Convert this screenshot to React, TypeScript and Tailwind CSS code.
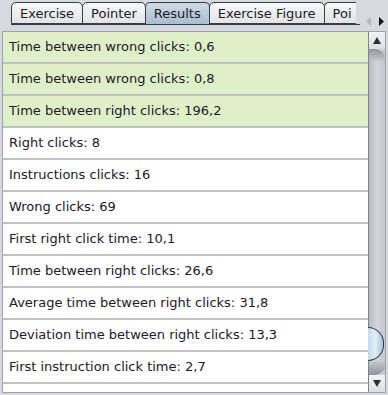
import React from 'react';

// ── 資料 ──────────────────────────────────────────────────────────────────────
const TABS = ['Exercise', 'Pointer', 'Results', 'Exercise Figure', 'Poi'];
const ACTIVE = 'Results';

const ROWS: { text: string; hi?: boolean }[] = [
  { text: 'Time between wrong clicks: 0,6', hi: true },
  { text: 'Time between wrong clicks: 0,8', hi: true },
  { text: 'Time between right clicks: 196,2', hi: true },
  { text: 'Right clicks: 8' },
  { text: 'Instructions clicks: 16' },
  { text: 'Wrong clicks: 69' },
  { text: 'First right click time: 10,1' },
  { text: 'Time between right clicks: 26,6' },
  { text: 'Average time between right clicks: 31,8' },
  { text: 'Deviation time between right clicks: 13,3' },
  { text: 'First instruction click time: 2,7' },
  { text: '' },
];

function Tab({ label }: { label: string }) {
  const active = label === ACTIVE;
  const clipped = label === 'Poi';
  return (
    <div
      className={`h-[22px] shrink-0 -mr-px flex items-center border border-[#3a3d44] rounded-t-[5px] px-[8px] leading-none
        ${active
          ? 'bg-gradient-to-b from-[#cfdbe7] to-[#a8bdd1] border-b-0'
          : 'bg-gradient-to-b from-[#f7f8fa] to-[#e2e4e9]'}
        ${clipped ? 'w-[32px] overflow-hidden border-r-0 rounded-tr-none' : ''}`}
    >
      <span className="text-[13px] text-[#1b1b22] whitespace-nowrap">{label}</span>
    </div>
  );
}

function ScrollBar() {
  return (
    <div className="w-[17px] shrink-0 flex flex-col border-l border-[#7f838b] bg-gradient-to-r from-[#b9bcc3] via-[#d3d6dc] to-[#c4c7ce]">
      {/* 上箭頭 */}
      <div className="h-[17px] flex items-center justify-center bg-gradient-to-b from-[#f2f3f5] to-[#dcdee3]">
        <svg width="8" height="7" viewBox="0 0 8 7"><path d="M4 0 L8 7 L0 7 Z" fill="#2c2f36" /></svg>
      </div>
      <div className="h-[12px] bg-gradient-to-b from-[#8f939b] to-[#c6c9cf] rounded-tr-[10px]" />
      <div className="flex-1" />
      {/* 捲軸滑塊 */}
      <div className="h-[34px] -ml-px mr-px rounded-r-full border border-l-0 border-[#2f4256] bg-gradient-to-r from-[#c7d9e8] via-[#e4eef6] to-[#a9c3d9]" />
      <div className="h-[14px] bg-gradient-to-b from-[#c6c9cf] to-[#8f939b] rounded-br-[10px]" />
      {/* 下箭頭 */}
      <div className="h-[17px] flex items-center justify-center bg-gradient-to-b from-[#f2f3f5] to-[#dcdee3]">
        <svg width="8" height="7" viewBox="0 0 8 7"><path d="M0 0 L8 0 L4 7 Z" fill="#2c2f36" /></svg>
      </div>
    </div>
  );
}

export default function App() {
  return (
    <div
      className="w-[388px] h-[395px] bg-[#d6d9df] flex flex-col overflow-hidden"
      style={{ fontFamily: '"DejaVu Sans", sans-serif' }}
    >
      {/* 分頁列 */}
      <div className="h-[31px] flex items-start pt-[3px] pl-[11px]">
        <div className="flex items-end border-b border-[#3a3d44] h-[22px] w-[349px]">
          {TABS.map(t => <Tab key={t} label={t} />)}
        </div>
        <div className="flex items-center gap-[8px] ml-[6px] mt-[14px]">
          <svg width="5" height="9" viewBox="0 0 5 9"><path d="M5 0 L0 4.5 L5 9 Z" fill="#b4b7bd" /></svg>
          <svg width="5" height="9" viewBox="0 0 5 9"><path d="M0 0 L5 4.5 L0 9 Z" fill="#111" /></svg>
        </div>
      </div>

      {/* 內容區 */}
      <div className="ml-[2px] w-[384px] h-[362px] border border-[#9ea3ab] flex bg-white">
        <div className="flex-1 overflow-hidden">
          {ROWS.map((r, i) => (
            <div
              key={i}
              className={`h-[32px] border-b-2 border-[#c0c0c0] flex items-center pl-[6px] text-[13px] text-[#22182a] whitespace-nowrap
                ${r.hi ? 'bg-[#dff0c9]' : 'bg-white'}`}
            >
              {r.text}
            </div>
          ))}
        </div>
        <ScrollBar />
      </div>
    </div>
  );
}
